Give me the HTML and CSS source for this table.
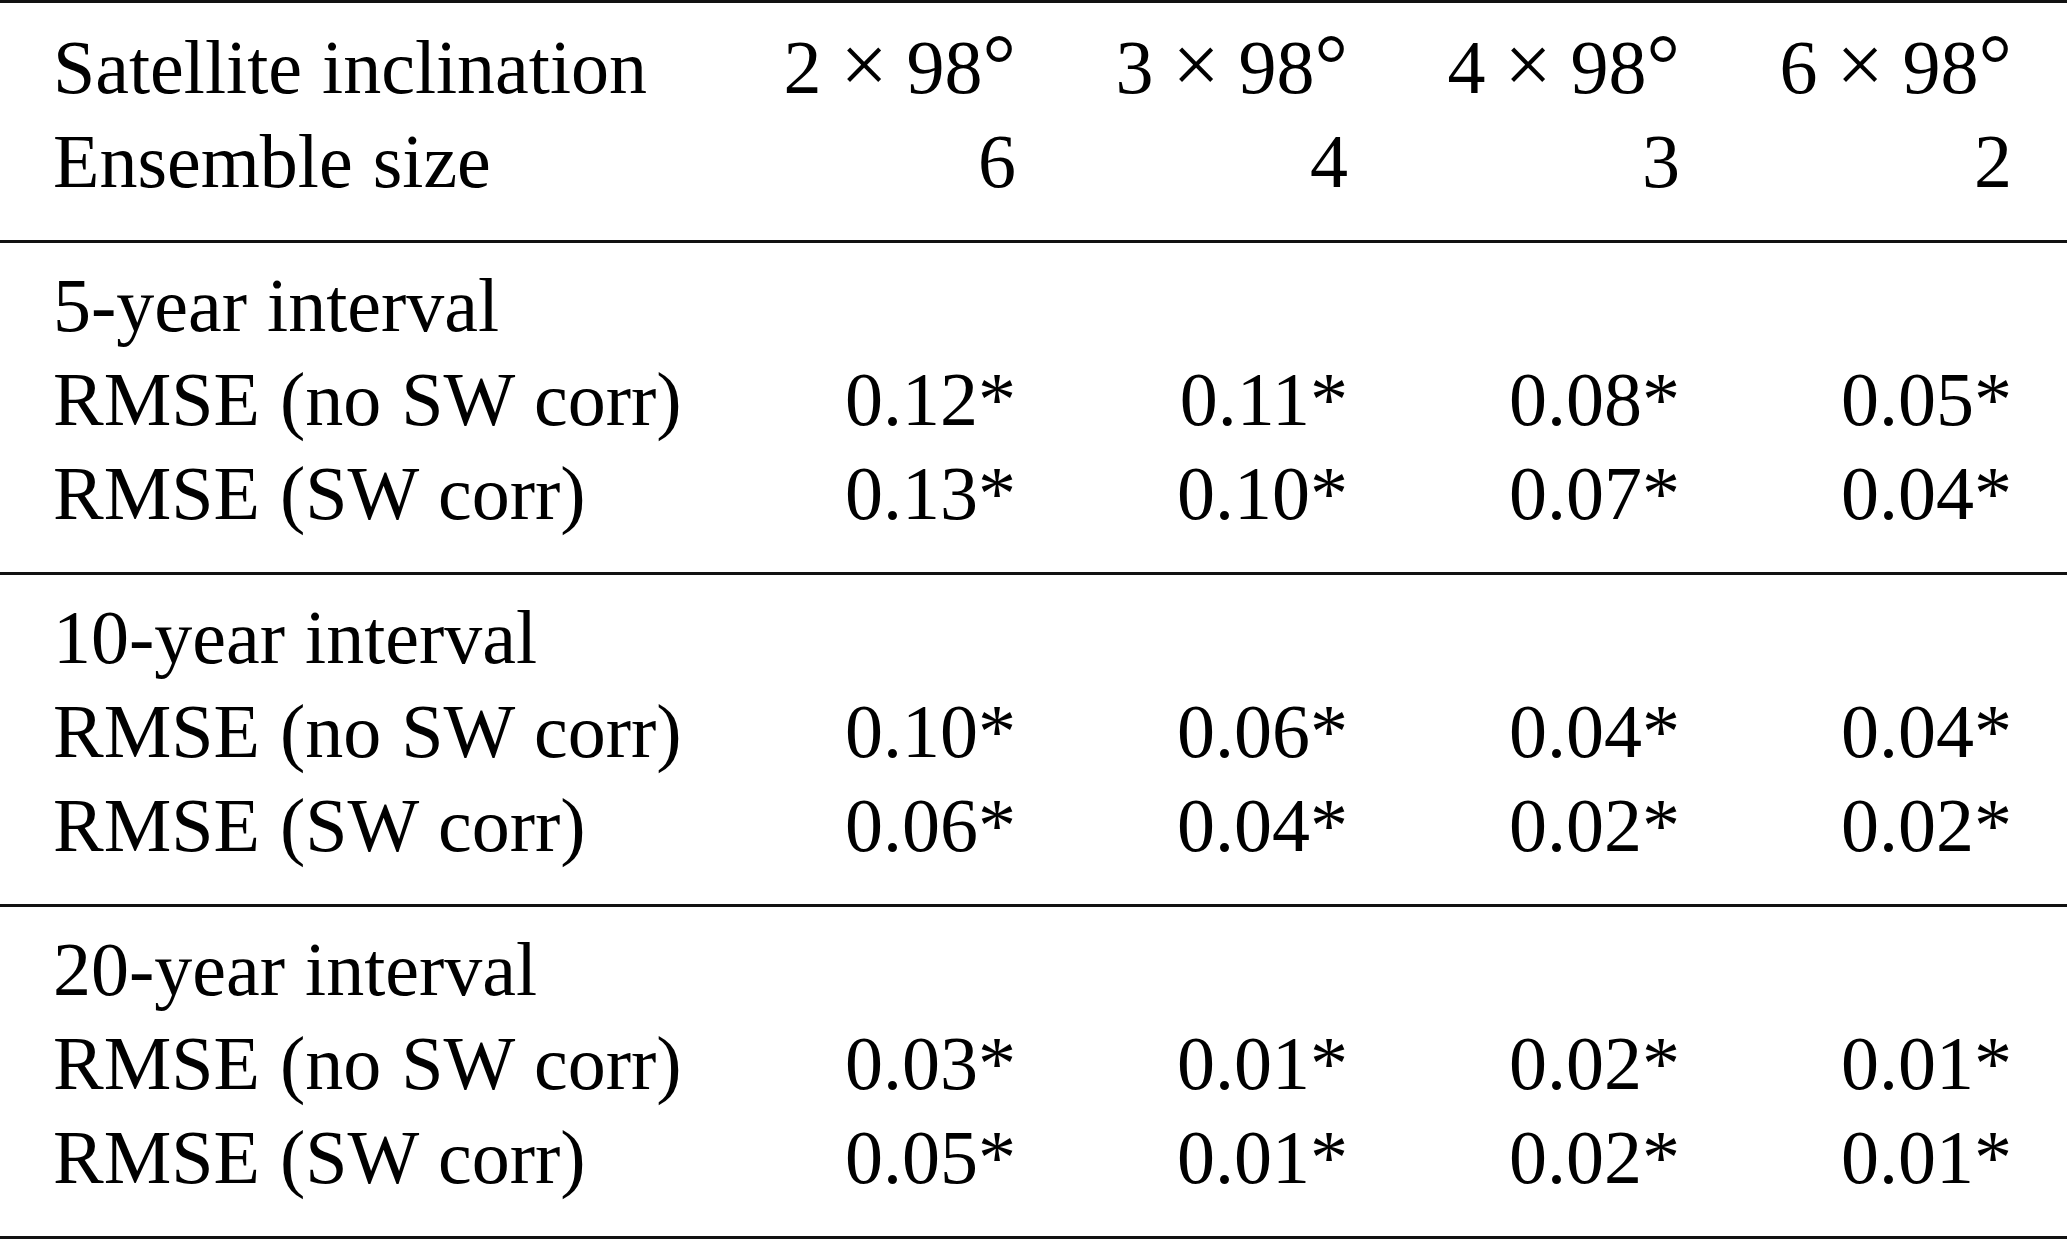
FILE: index.html
```html
<!DOCTYPE html>
<html lang="en">
<head>
<meta charset="utf-8">
<title>Table</title>
<link rel="stylesheet" href="styles.css">
</head>
<body>
<div class="tbl">
  <div class="grp head">
    <div class="lbl">Satellite inclination</div>
    <div class="num">2 <span class="op">×</span> 98<span class="deg">°</span></div>
    <div class="num">3 <span class="op">×</span> 98<span class="deg">°</span></div>
    <div class="num">4 <span class="op">×</span> 98<span class="deg">°</span></div>
    <div class="num">6 <span class="op">×</span> 98<span class="deg">°</span></div>
    <div class="lbl">Ensemble size</div>
    <div class="num">6</div>
    <div class="num">4</div>
    <div class="num">3</div>
    <div class="num">2</div>
  </div>
  <div class="grp">
    <div class="lbl full">5-year interval</div>
    <div class="lbl">RMSE (no SW corr)</div>
    <div class="num">0.12*</div>
    <div class="num">0.11*</div>
    <div class="num">0.08*</div>
    <div class="num">0.05*</div>
    <div class="lbl">RMSE (SW corr)</div>
    <div class="num">0.13*</div>
    <div class="num">0.10*</div>
    <div class="num">0.07*</div>
    <div class="num">0.04*</div>
  </div>
  <div class="grp">
    <div class="lbl full">10-year interval</div>
    <div class="lbl">RMSE (no SW corr)</div>
    <div class="num">0.10*</div>
    <div class="num">0.06*</div>
    <div class="num">0.04*</div>
    <div class="num">0.04*</div>
    <div class="lbl">RMSE (SW corr)</div>
    <div class="num">0.06*</div>
    <div class="num">0.04*</div>
    <div class="num">0.02*</div>
    <div class="num">0.02*</div>
  </div>
  <div class="grp">
    <div class="lbl full">20-year interval</div>
    <div class="lbl">RMSE (no SW corr)</div>
    <div class="num">0.03*</div>
    <div class="num">0.01*</div>
    <div class="num">0.02*</div>
    <div class="num">0.01*</div>
    <div class="lbl">RMSE (SW corr)</div>
    <div class="num">0.05*</div>
    <div class="num">0.01*</div>
    <div class="num">0.02*</div>
    <div class="num">0.01*</div>
  </div>
</div>
</body>
</html>
```

FILE: styles.css
```css
html, body {
  margin: 0;
  padding: 0;
  background: #ffffff;
}

.tbl {
  font-family: "Liberation Serif", "Times New Roman", serif;
  font-size: 76px;
  line-height: 94px;
  color: #000000;
  border-top: 3px solid #111111;
  border-bottom: 3px solid #111111;
  width: 2067px;
}

.grp {
  display: grid;
  grid-template-columns: 631px repeat(4, 332px);
  padding: 15px 0 32px 53px;
}

.grp + .grp {
  border-top: 3px solid #111111;
}

.head {
  padding-top: 17px;
}

.lbl {
  white-space: nowrap;
  word-spacing: 1px;
}

.num {
  text-align: right;
  white-space: nowrap;
}

.op {
  font-size: 1.1em;
  line-height: 1;
}

.deg {
  font-size: 1.1em;
  line-height: 1;
}

.full {
  grid-column: 1 / -1;
}
```
